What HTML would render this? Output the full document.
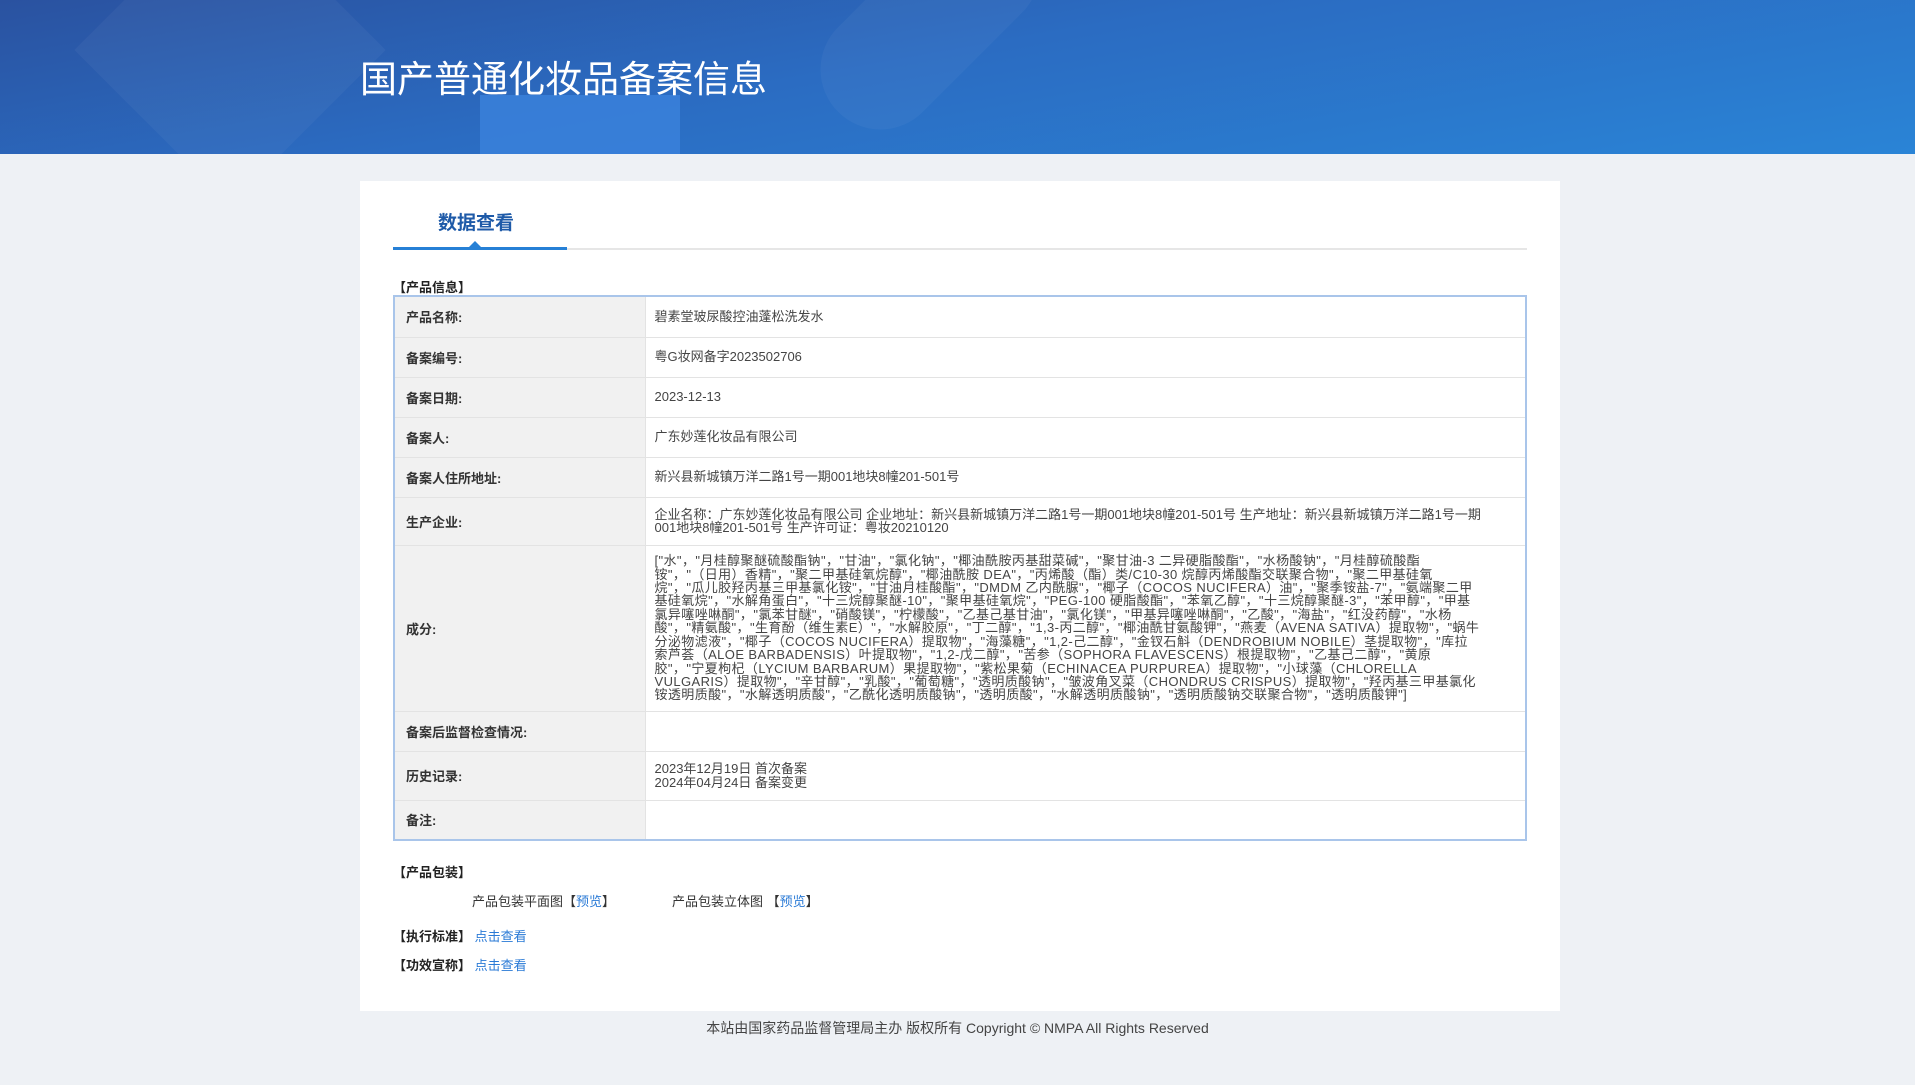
<!DOCTYPE html>
<html><head><meta charset="utf-8"><style>
*{margin:0;padding:0;box-sizing:border-box}
body{width:1915px;height:1085px;background:#eef1f5;font-family:"Liberation Sans","Noto Sans CJK SC",sans-serif;color:#333;overflow:hidden;position:relative}
.hd{position:absolute;left:0;top:0;width:1915px;height:154px;background:linear-gradient(170deg,#2a52a0 0%,#2b6cc2 45%,#2a84d6 100%);overflow:hidden}
.hd .s1{position:absolute;left:480px;top:95px;width:200px;height:70px;background:#3b82dc;opacity:.8}
.hd .s2{position:absolute;left:120px;top:-60px;width:220px;height:220px;background:rgba(255,255,255,.04);transform:rotate(45deg)}
.hd .s3{position:absolute;left:800px;top:-40px;width:260px;height:120px;background:rgba(255,255,255,.04);transform:rotate(-45deg);border-radius:60px}
.hd h1{position:absolute;left:360px;top:58px;font-size:37px;font-weight:normal;color:#fff;line-height:44px}
.card{position:absolute;left:360px;top:181px;width:1200px;height:830px;background:#fff}
.tab{position:absolute;left:78px;top:27px;font-size:19px;font-weight:bold;color:#1e5aa8}
.line{position:absolute;left:393px;top:248px;width:1134px;height:2px;background:#e6e6e6}
.line2{position:absolute;left:393px;top:247px;width:174px;height:3px;background:#2680d6}
.tri{position:absolute;left:469px;top:241px;width:0;height:0;border-left:6px solid transparent;border-right:6px solid transparent;border-bottom:6px solid #2680d6}
.sec{position:absolute;font-size:13px;font-weight:bold;color:#222}
table{position:absolute;left:393px;top:295px;width:1134px;border-collapse:collapse;border:2px solid #a9c5ea;font-size:13px}
td{border-top:1px solid #e3e3e3;vertical-align:middle}
td.l{width:251px;background:#f1f1f1;font-weight:bold;padding-left:11px;color:#333;border-right:1px solid #e3e3e3}
td.v{padding-left:9px;padding-right:44px;color:#444;line-height:13.4px}
.txt{position:absolute;font-size:13px;color:#333}
a{color:#2a7ad6;text-decoration:none}
.ft{position:absolute;left:0;top:1018px;width:1915px;text-align:center;font-size:14px;color:#444}
</style></head><body>
<div class="hd"><div class="s2"></div><div class="s3"></div><div class="s1"></div><h1>国产普通化妆品备案信息</h1></div>
<div class="card"><div class="tab">数据查看</div></div>
<div class="line"></div><div class="line2"></div><div class="tri"></div>
<div class="sec" style="left:393px;top:277px">【产品信息】</div>
<table>
<tr style="height:41px"><td class="l">产品名称:</td><td class="v">碧素堂玻尿酸控油蓬松洗发水</td></tr>
<tr style="height:40px"><td class="l">备案编号:</td><td class="v">粤G妆网备字2023502706</td></tr>
<tr style="height:40px"><td class="l">备案日期:</td><td class="v">2023-12-13</td></tr>
<tr style="height:40px"><td class="l">备案人:</td><td class="v">广东妙莲化妆品有限公司</td></tr>
<tr style="height:40px"><td class="l">备案人住所地址:</td><td class="v">新兴县新城镇万洋二路1号一期001地块8幢201-501号</td></tr>
<tr style="height:48px"><td class="l">生产企业:</td><td class="v">企业名称：广东妙莲化妆品有限公司 企业地址：新兴县新城镇万洋二路1号一期001地块8幢201-501号 生产地址：新兴县新城镇万洋二路1号一期001地块8幢201-501号 生产许可证：粤妆20210120</td></tr>
<tr style="height:166px"><td class="l">成分:</td><td class="v" style="font-size:13px;letter-spacing:0.4px">["水"，"月桂醇聚醚硫酸酯钠"，"甘油"，"氯化钠"，"椰油酰胺丙基甜菜碱"，"聚甘油-3 二异硬脂酸酯"，"水杨酸钠"，"月桂醇硫酸酯铵"，"（日用）香精"，"聚二甲基硅氧烷醇"，"椰油酰胺 DEA"，"丙烯酸（酯）类/C10-30 烷醇丙烯酸酯交联聚合物"，"聚二甲基硅氧烷"，"瓜儿胶羟丙基三甲基氯化铵"，"甘油月桂酸酯"，"DMDM 乙内酰脲"，"椰子（COCOS NUCIFERA）油"，"聚季铵盐-7"，"氨端聚二甲基硅氧烷"，"水解角蛋白"，"十三烷醇聚醚-10"，"聚甲基硅氧烷"，"PEG-100 硬脂酸酯"，"苯氧乙醇"，"十三烷醇聚醚-3"，"苯甲醇"，"甲基氯异噻唑啉酮"，"氯苯甘醚"，"硝酸镁"，"柠檬酸"，"乙基己基甘油"，"氯化镁"，"甲基异噻唑啉酮"，"乙酸"，"海盐"，"红没药醇"，"水杨酸"，"精氨酸"，"生育酚（维生素E）"，"水解胶原"，"丁二醇"，"1,3-丙二醇"，"椰油酰甘氨酸钾"，"燕麦（AVENA SATIVA）提取物"，"蜗牛分泌物滤液"，"椰子（COCOS NUCIFERA）提取物"，"海藻糖"，"1,2-己二醇"，"金钗石斛（DENDROBIUM NOBILE）茎提取物"，"库拉索芦荟（ALOE BARBADENSIS）叶提取物"，"1,2-戊二醇"，"苦参（SOPHORA FLAVESCENS）根提取物"，"乙基己二醇"，"黄原胶"，"宁夏枸杞（LYCIUM BARBARUM）果提取物"，"紫松果菊（ECHINACEA PURPUREA）提取物"，"小球藻（CHLORELLA VULGARIS）提取物"，"辛甘醇"，"乳酸"，"葡萄糖"，"透明质酸钠"，"皱波角叉菜（CHONDRUS CRISPUS）提取物"，"羟丙基三甲基氯化铵透明质酸"，"水解透明质酸"，"乙酰化透明质酸钠"，"透明质酸"，"水解透明质酸钠"，"透明质酸钠交联聚合物"，"透明质酸钾"]</td></tr>
<tr style="height:40px"><td class="l">备案后监督检查情况:</td><td class="v"></td></tr>
<tr style="height:49px"><td class="l">历史记录:</td><td class="v">2023年12月19日 首次备案<br>2024年04月24日 备案变更</td></tr>
<tr style="height:40px"><td class="l">备注:</td><td class="v"></td></tr>
</table>
<div class="sec" style="left:393px;top:862px">【产品包装】</div>
<div class="txt" style="left:472px;top:891px">产品包装平面图【<a>预览</a>】</div>
<div class="txt" style="left:672px;top:891px">产品包装立体图 【<a>预览</a>】</div>
<div class="sec" style="left:393px;top:926px">【执行标准】 <a style="font-weight:normal">点击查看</a></div>
<div class="sec" style="left:393px;top:955px">【功效宣称】 <a style="font-weight:normal">点击查看</a></div>
<div class="ft">本站由国家药品监督管理局主办 版权所有 Copyright © NMPA All Rights Reserved</div>
</body></html>
